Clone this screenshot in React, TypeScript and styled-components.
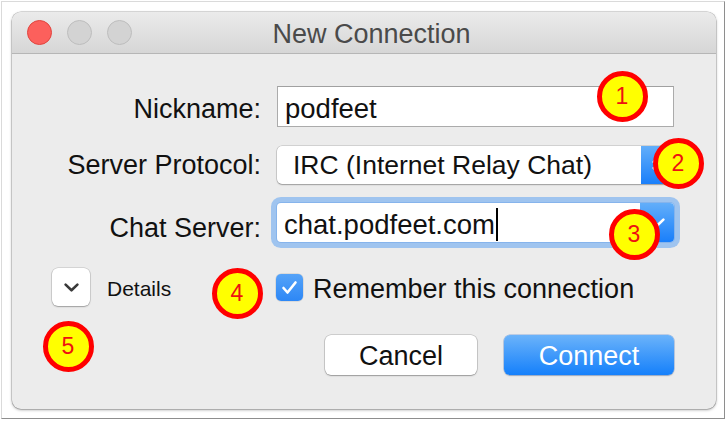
import React from "react";
import styled, { createGlobalStyle } from "styled-components";

const Global = createGlobalStyle`
  html, body { margin: 0; padding: 0; background: #ffffff; }
  body {
    width: 728px;
    height: 422px;
    overflow: hidden;
    font-family: "Liberation Sans", Arial, sans-serif;
    color: #111111;
  }
`;

const Frame = styled.div`
  position: relative;
  box-sizing: border-box;
  margin: 1px 0 0 1px;
  width: 724px;
  height: 418px;
  border: 1px solid #dadada;
  border-right-color: #8e8e8e;
  border-bottom-color: #8e8e8e;
  padding: 10px 0 0 10px;
  background: #ffffff;
`;

const Window = styled.div`
  box-sizing: border-box;
  width: 704px;
  height: 397px;
  border-radius: 9px;
  background: #ececec;
  box-shadow: 0 0 0 0.5px rgba(0, 0, 0, 0.25), 0 1px 3px rgba(0, 0, 0, 0.35);
  overflow: hidden;
  display: flex;
  flex-direction: column;
`;

const TitleBar = styled.div`
  box-sizing: border-box;
  height: 42px;
  flex: none;
  display: grid;
  grid-template-columns: 1fr auto 1fr;
  align-items: center;
  padding-left: 15px;
  background: linear-gradient(#ebebeb, #d6d6d6);
  border-bottom: 1px solid #b6b6b6;
`;

const Lights = styled.div`
  display: flex;
  gap: 15px;
  align-items: center;
`;

const Light = styled.span<{ $fill: string; $edge: string }>`
  box-sizing: border-box;
  width: 25px;
  height: 25px;
  border-radius: 50%;
  background: ${(p) => p.$fill};
  border: 1px solid ${(p) => p.$edge};
`;

const Title = styled.div`
  font-size: 27px;
  color: #4a4a4a;
  padding-top: 4px;
  line-height: 31px;
`;

const Body = styled.div`
  display: flex;
  flex-direction: column;
  padding: 32px 42px 0 40px;
`;

const Row = styled.div<{ $top: number }>`
  display: grid;
  grid-template-columns: 210px 397px;
  column-gap: 15px;
  align-items: start;
  margin-top: ${(p) => p.$top}px;
`;

const Label = styled.div<{ $offset: number }>`
  text-align: right;
  font-size: 27px;
  line-height: 30px;
  padding-top: ${(p) => p.$offset}px;
  margin-right: 1px;
  color: #111111;
  white-space: nowrap;
`;

const TextField = styled.div`
  box-sizing: border-box;
  height: 41px;
  background: #ffffff;
  border: 1px solid #ababab;
  border-top-color: #a0a0a0;
  padding: 4px 0 0 7px;
  font-size: 27.5px;
  line-height: 35px;
  color: #111111;
`;

const Popup = styled.div`
  box-sizing: border-box;
  height: 38px;
  display: flex;
  border-radius: 5px;
  overflow: hidden;
  background: #ffffff;
  box-shadow: 0 0 0 0.5px rgba(0, 0, 0, 0.22), 0 1px 1.5px rgba(0, 0, 0, 0.25);
`;

const PopupText = styled.div`
  flex: 1;
  padding-left: 16px;
  font-size: 26.5px;
  line-height: 38px;
  color: #111111;
  white-space: nowrap;
`;

const BlueCap = styled.div<{ $w: number }>`
  flex: none;
  width: ${(p) => p.$w}px;
  display: flex;
  align-items: center;
  justify-content: center;
  background: linear-gradient(#62aefa, #1a7ffa);
`;

const Combo = styled.div`
  box-sizing: border-box;
  height: 39px;
  display: flex;
  border-radius: 4px;
  background: #ffffff;
  box-shadow: 0 0 0 1px #86b4ec, 0 0 0 6px rgba(140, 186, 240, 0.8);
  overflow: hidden;
`;

const ComboText = styled.div`
  flex: 1;
  padding: 4px 0 0 7px;
  font-size: 27.5px;
  line-height: 35px;
  color: #111111;
  white-space: nowrap;
`;

const Caret = styled.span`
  display: inline-block;
  width: 2px;
  height: 33px;
  margin-left: 1px;
  background: #000000;
  vertical-align: -7px;
`;

const DetailsGroup = styled.div`
  display: flex;
  align-items: center;
  gap: 17px;
  height: 38px;
`;

const Disclosure = styled.div`
  box-sizing: border-box;
  width: 38px;
  height: 38px;
  border-radius: 6px;
  background: #ffffff;
  box-shadow: 0 0 0 0.5px rgba(0, 0, 0, 0.2), 0 1px 1.5px rgba(0, 0, 0, 0.25);
  display: flex;
  align-items: center;
  justify-content: center;
`;

const DetailsText = styled.span`
  font-size: 21px;
  line-height: 24px;
  padding-top: 3px;
  color: #111111;
`;

const CheckGroup = styled.div`
  display: flex;
  align-items: center;
  gap: 10px;
  height: 38px;
  margin-left: -1px;
`;

const CheckBox = styled.span`
  box-sizing: border-box;
  width: 27px;
  height: 27px;
  border-radius: 5px;
  background: linear-gradient(#55a3f8, #2d87f6);
  box-shadow: 0 0 0 0.5px rgba(0, 0, 0, 0.15);
  display: flex;
  align-items: center;
  justify-content: center;
`;

const CheckText = styled.span`
  font-size: 27px;
  line-height: 30px;
  padding-top: 4px;
  color: #111111;
  white-space: nowrap;
`;

const Buttons = styled.div`
  display: flex;
  justify-content: flex-end;
  gap: 27px;
  margin-top: 29px;
`;

const Button = styled.button<{ $primary?: boolean; $w: number }>`
  box-sizing: border-box;
  width: ${(p) => p.$w}px;
  height: 40px;
  border: none;
  border-radius: 6px;
  padding: 2px 0 0;
  font-family: "Liberation Sans", Arial, sans-serif;
  font-size: 27px;
  line-height: 30px;
  color: ${(p) => (p.$primary ? "#ffffff" : "#111111")};
  background: ${(p) =>
    p.$primary ? "linear-gradient(#6bb3fa, #1580fb)" : "#ffffff"};
  box-shadow: ${(p) =>
    p.$primary
      ? "0 0 0 0.5px rgba(0, 80, 200, 0.4), 0 1px 1.5px rgba(0, 0, 0, 0.2)"
      : "0 0 0 0.5px rgba(0, 0, 0, 0.25), 0 1px 1.5px rgba(0, 0, 0, 0.25)"};
`;

const Badge = styled.div<{ $x: number; $y: number }>`
  position: absolute;
  left: ${(p) => p.$x - 27.5}px;
  top: ${(p) => p.$y - 27.5}px;
  box-sizing: border-box;
  width: 51px;
  height: 51px;
  border-radius: 50%;
  background: #ffff00;
  border: 5.5px solid #ff0000;
  display: flex;
  align-items: center;
  justify-content: center;
  font-size: 23px;
  line-height: 1;
  color: #ee1111;
`;

const ChevronDown = ({ color, w = 14 }: { color: string; w?: number }) => (
  <svg width={w} height={w * 0.6} viewBox="0 0 14 8.4">
    <path d="M1.5 1.5 L7 6.8 L12.5 1.5" fill="none" stroke={color} strokeWidth="2.4" strokeLinecap="round" strokeLinejoin="round" />
  </svg>
);

const UpDown = () => (
  <svg width="14" height="22" viewBox="0 0 14 22">
    <path d="M2.5 8 L7 3.5 L11.5 8" fill="none" stroke="#fff" strokeWidth="2.2" strokeLinecap="round" strokeLinejoin="round" />
    <path d="M2.5 14 L7 18.5 L11.5 14" fill="none" stroke="#fff" strokeWidth="2.2" strokeLinecap="round" strokeLinejoin="round" />
  </svg>
);

const Check = () => (
  <svg width="17" height="15" viewBox="0 0 17 15">
    <path d="M2.5 8 L6.5 12.5 L14.5 2.5" fill="none" stroke="#fff" strokeWidth="2.6" strokeLinecap="round" strokeLinejoin="round" />
  </svg>
);

export default function App() {
  return (
    <>
      <Global />
      <Frame>
        <Window>
          <TitleBar>
            <Lights>
              <Light $fill="#fc605c" $edge="#e0443e" />
              <Light $fill="#d3d3d3" $edge="#bdbdbd" />
              <Light $fill="#d3d3d3" $edge="#bdbdbd" />
            </Lights>
            <Title>New Connection</Title>
            <span />
          </TitleBar>
          <Body>
            <Row $top={0}>
              <Label $offset={8}>Nickname:</Label>
              <TextField>podfeet</TextField>
            </Row>
            <Row $top={19}>
              <Label $offset={4}>Server Protocol:</Label>
              <Popup>
                <PopupText>IRC (Internet Relay Chat)</PopupText>
                <BlueCap $w={33}>
                  <UpDown />
                </BlueCap>
              </Popup>
            </Row>
            <Row $top={19}>
              <Label $offset={10}>Chat Server:</Label>
              <Combo>
                <ComboText>
                  chat.podfeet.com
                  <Caret />
                </ComboText>
                <BlueCap $w={34}>
                  <ChevronDown color="#ffffff" w={15} />
                </BlueCap>
              </Combo>
            </Row>
            <Row $top={25}>
              <DetailsGroup>
                <Disclosure>
                  <ChevronDown color="#3a3a3a" w={15} />
                </Disclosure>
                <DetailsText>Details</DetailsText>
              </DetailsGroup>
              <CheckGroup>
                <CheckBox>
                  <Check />
                </CheckBox>
                <CheckText>Remember this connection</CheckText>
              </CheckGroup>
            </Row>
            <Buttons>
              <Button $w={152}>Cancel</Button>
              <Button $w={170} $primary>
                Connect
              </Button>
            </Buttons>
          </Body>
        </Window>
        <Badge $x={622} $y={96}>1</Badge>
        <Badge $x={678} $y={163}>2</Badge>
        <Badge $x={634} $y={234}>3</Badge>
        <Badge $x={237} $y={293}>4</Badge>
        <Badge $x={68} $y={346}>5</Badge>
      </Frame>
    </>
  );
}
